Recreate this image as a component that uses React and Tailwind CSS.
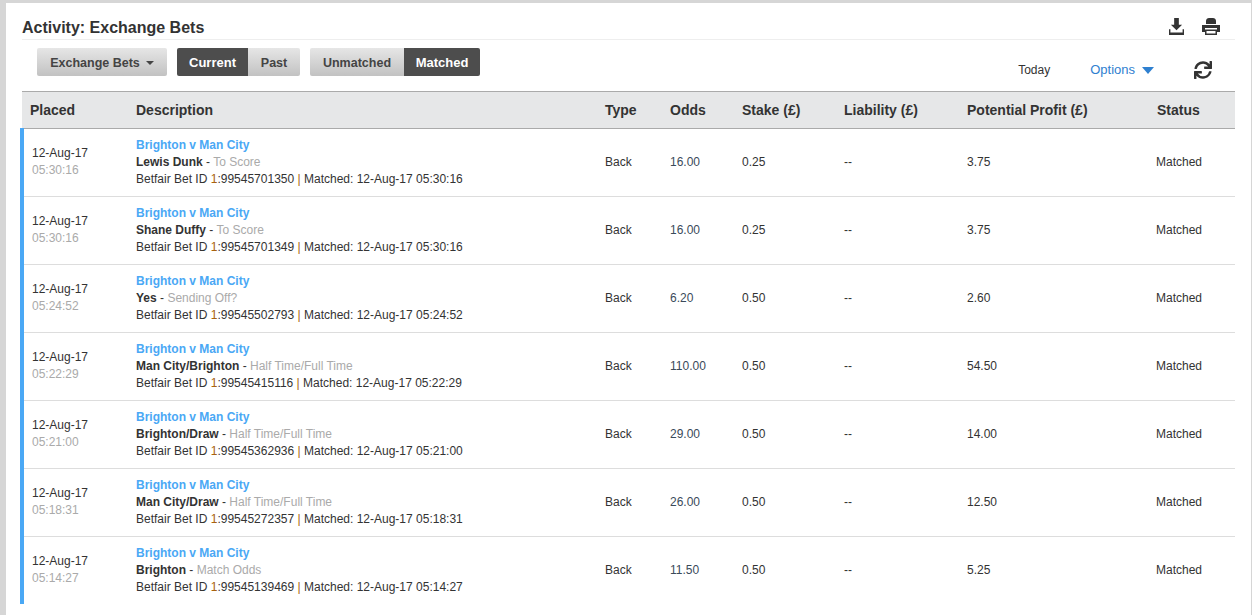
import { FaSync } from 'react-icons/fa';

const bets = [
  { date: '12-Aug-17', time: '05:30:16', sel: 'Lewis Dunk', market: 'To Score', id: '99545701350', odds: '16.00', stake: '0.25', profit: '3.75' },
  { date: '12-Aug-17', time: '05:30:16', sel: 'Shane Duffy', market: 'To Score', id: '99545701349', odds: '16.00', stake: '0.25', profit: '3.75' },
  { date: '12-Aug-17', time: '05:24:52', sel: 'Yes', market: 'Sending Off?', id: '99545502793', odds: '6.20', stake: '0.50', profit: '2.60' },
  { date: '12-Aug-17', time: '05:22:29', sel: 'Man City/Brighton', market: 'Half Time/Full Time', id: '99545415116', odds: '110.00', stake: '0.50', profit: '54.50' },
  { date: '12-Aug-17', time: '05:21:00', sel: 'Brighton/Draw', market: 'Half Time/Full Time', id: '99545362936', odds: '29.00', stake: '0.50', profit: '14.00' },
  { date: '12-Aug-17', time: '05:18:31', sel: 'Man City/Draw', market: 'Half Time/Full Time', id: '99545272357', odds: '26.00', stake: '0.50', profit: '12.50' },
  { date: '12-Aug-17', time: '05:14:27', sel: 'Brighton', market: 'Match Odds', id: '99545139469', odds: '11.50', stake: '0.50', profit: '5.25' },
];

const lightBtn = 'flex items-center justify-center h-[28px] pt-[2px] bg-gradient-to-b from-[#e6e6e6] to-[#c2c2c2] text-[#444] text-[12.5px] font-bold';
const darkBtn = 'flex items-center justify-center h-[28px] pt-[2px] bg-[#4d4d4d] text-white text-[13px] font-bold';

function DownloadIcon() {
  return (
    <svg width="15" height="17" viewBox="0 0 16 18" className="text-[#333]">
      <path fill="currentColor" d="M5.500 0h5v7h3.500L8 13 2 7h3.500z" />
      <path fill="currentColor" d="M0 12h1.500v3.500h13V12H16v6H0z" />
    </svg>
  );
}

function PrintIcon() {
  return (
    <svg width="18" height="17" viewBox="0 0 18 17" className="text-[#333]">
      <path fill="currentColor" d="M4 6V3c0-2 1.500-3 3-3h4c1.500 0 3 1 3 3v3z" />
      <path fill="currentColor" fillRule="evenodd" d="M0 7h18v7h-3v3H3v-3H0zM3 10v1.500h12V10zM4.500 13v2.500h9V13z" />
    </svg>
  );
}

function BetRow({ bet, last }) {
  return (
    <div className={`flex text-[12px] text-[#333] ${last ? 'h-[67px]' : 'h-[68px] border-b border-[#ddd]'}`}>
      <div className="w-[112px] pl-[8px] pb-[2px] flex flex-col justify-center leading-[17px]">
        <span>{bet.date}</span>
        <span className="text-[#aaa]">{bet.time}</span>
      </div>
      <div className="w-[469px] flex flex-col justify-center leading-[17px]">
        <span className="text-[#4aa8f5] font-bold">Brighton v Man City</span>
        <span>
          <b>{bet.sel}</b> - <span className="text-[#aaa]">{bet.market}</span>
        </span>
        <span>Betfair Bet ID <span className="text-[#a8620f]">1</span>:{bet.id} <span className="text-[#a8620f]">|</span> Matched: {bet.date} {bet.time}</span>
      </div>
      <div className="w-[65px] flex items-center pb-[1px]">Back</div>
      <div className="w-[72px] flex items-center pb-[1px] text-[#3a4a5a]">{bet.odds}</div>
      <div className="w-[102px] flex items-center pb-[1px]">{bet.stake}</div>
      <div className="w-[123px] flex items-center pb-[1px]">--</div>
      <div className="w-[189px] flex items-center pb-[1px]">{bet.profit}</div>
      <div className="flex items-center pb-[1px]">Matched</div>
    </div>
  );
}

export default function App() {
  return (
    <div className="h-[615px] overflow-hidden bg-[#d6d6d6] pt-[3px] pl-[6px] pr-[1px] font-['Liberation_Sans',Arial,sans-serif]">
      <div className="h-full bg-white pl-[16px] pr-[16px]">
        <div className="flex items-center justify-between h-[37px] border-b border-[#eee] pt-[13px]">
          <h1 className="text-[16px] font-bold text-[#333]">Activity: Exchange Bets</h1>
          <div className="flex items-center gap-[18px] pr-[15px] pb-[3px]">
            <DownloadIcon />
            <PrintIcon />
          </div>
        </div>

        <div className="flex h-[51px] pl-[15px] pt-[8px]">
          <button className={`${lightBtn} w-[130px] rounded-[2px] gap-[6px]`}>
            Exchange Bets
            <span className="border-x-[4px] border-t-[4px] border-x-transparent border-t-[#444]" />
          </button>
          <div className="flex ml-[10px]">
            <button className={`${darkBtn} w-[71px] rounded-l-[2px]`}>Current</button>
            <button className={`${lightBtn} w-[52px] rounded-r-[2px]`}>Past</button>
          </div>
          <div className="flex ml-[10px]">
            <button className={`${lightBtn} w-[94px] rounded-l-[2px]`}>Unmatched</button>
            <button className={`${darkBtn} w-[76px] rounded-r-[2px]`}>Matched</button>
          </div>
          <div className="ml-auto flex items-center h-[28px] mt-[7px] pt-[2px]">
            <span className="text-[12px] text-[#333]">Today</span>
            <span className="ml-[40px] text-[13px] text-[#2f80d0]">Options</span>
            <span className="ml-[7px] border-x-[6.500px] border-t-[7px] border-x-transparent border-t-[#2f80d0]" />
            <FaSync className="ml-[40px] mr-[23px] text-[#333] text-[18px]" />
          </div>
        </div>

        <div className="flex items-center h-[38px] bg-[#e6e7e8] border-y border-[#aaa] text-[14px] font-bold text-[#333]">
          <div className="w-[114px] pl-[8px]">Placed</div>
          <div className="w-[469px]">Description</div>
          <div className="w-[65px]">Type</div>
          <div className="w-[72px]">Odds</div>
          <div className="w-[102px]">Stake (£)</div>
          <div className="w-[123px]">Liability (£)</div>
          <div className="w-[190px]">Potential Profit (£)</div>
          <div>Status</div>
        </div>

        <div className="-ml-[2px] -mt-[1px] pt-[1px] border-l-4 border-[#4aa8f5]">
          {bets.map((bet, i) => (
            <BetRow key={i} bet={bet} last={i === bets.length - 1} />
          ))}
        </div>
      </div>
    </div>
  );
}
